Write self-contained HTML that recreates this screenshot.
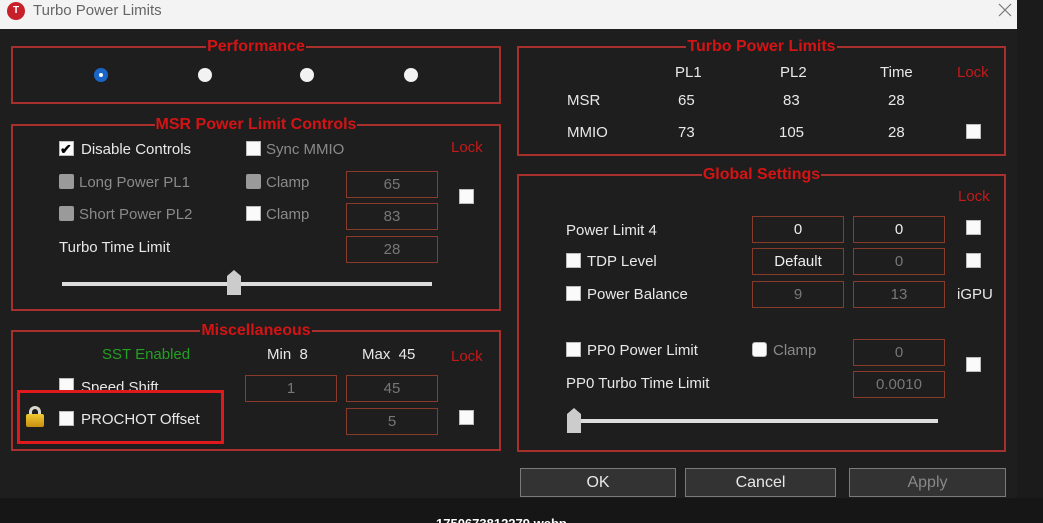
<!DOCTYPE html>
<html><head><meta charset="utf-8"><style>
*{margin:0;padding:0;box-sizing:border-box}
html,body{width:1043px;height:523px;overflow:hidden}
body{background:#161616;position:relative;font-family:"Liberation Sans",sans-serif;font-size:15px;color:#e8e8e8}
.a{position:absolute}
.win{left:0;top:0;width:1017px;height:498px;background:#1e1e1e}
.tb{left:0;top:0;width:1017px;height:29px;background:#f3f3f3}
.box{position:absolute;border:2px solid #a8302c}
.tt{position:absolute;top:-10px;left:0;right:0;text-align:center;line-height:17px}
.tt span{background:#1e1e1e;color:#d41414;font-weight:bold;font-size:16px;padding:0 1px}
.t{position:absolute;line-height:18px;white-space:nowrap;margin-top:1px}
.g{color:#8a8a8a}
.lk{color:#c41a1a}
.cb{position:absolute;width:15px;height:15px;background:#fafafa;border:1px solid #bbb}
.cbd{position:absolute;width:15px;height:15px;background:#9a9a9a;border-radius:2px}
.in{position:absolute;border:1px solid #8a3a2a;height:27px;width:92px;text-align:center;line-height:26px;color:#777}
.in.w{color:#eee}
.rd{position:absolute;width:14px;height:14px;border-radius:50%;background:#f2f2f2}
.btn{position:absolute;top:468px;height:29px;background:#333;border:1px solid #7a7a7a;text-align:center;line-height:27px;font-size:16px}
</style></head><body>
<div class="a win"></div>
<div class="a" style="left:1017px;top:0;width:26px;height:498px;background:#1b1b1b"></div>
<div class="a tb"></div>
<div class="a" style="left:7px;top:2px;width:18px;height:18px;border-radius:50%;background:#c8202a;color:#fff;font-size:10px;font-weight:bold;text-align:center;line-height:18px">T</div>
<div class="t" style="left:33px;top:1px;color:#666;font-size:15px">Turbo Power Limits</div>
<svg class="a" style="left:998px;top:3px" width="14" height="14"><path d="M1 1L13 13M13 1L1 13" stroke="#777" stroke-width="1.2"/></svg>

<!-- Performance -->
<div class="box" style="left:11px;top:46px;width:490px;height:58px"><div class="tt"><span>Performance</span></div></div>
<div class="rd" style="left:94px;top:68px;background:#1a66c8"></div>
<div class="a" style="left:99px;top:73px;width:4px;height:4px;border-radius:50%;background:#fff"></div>
<div class="rd" style="left:198px;top:68px"></div>
<div class="rd" style="left:300px;top:68px"></div>
<div class="rd" style="left:404px;top:68px"></div>

<!-- MSR -->
<div class="box" style="left:11px;top:124px;width:490px;height:187px"><div class="tt"><span>MSR Power Limit Controls</span></div></div>
<div class="cb" style="left:59px;top:141px"></div><div class="t" style="left:60px;top:139px;color:#000;font-size:14px;font-weight:bold">✔</div>
<div class="t" style="left:81px;top:140px">Disable Controls</div>
<div class="cb" style="left:246px;top:141px"></div><div class="t g" style="left:266px;top:140px">Sync MMIO</div>
<div class="t lk" style="left:451px;top:138px">Lock</div>
<div class="cbd" style="left:59px;top:174px"></div><div class="t g" style="left:79px;top:173px">Long Power PL1</div>
<div class="cbd" style="left:246px;top:174px"></div><div class="t g" style="left:266px;top:173px">Clamp</div>
<div class="cbd" style="left:59px;top:206px"></div><div class="t g" style="left:79px;top:205px">Short Power PL2</div>
<div class="cb" style="left:246px;top:206px"></div><div class="t g" style="left:266px;top:205px">Clamp</div>
<div class="t" style="left:59px;top:238px">Turbo Time Limit</div>
<div class="in" style="left:346px;top:171px">65</div>
<div class="in" style="left:346px;top:203px">83</div>
<div class="in" style="left:346px;top:236px">28</div>
<div class="cb" style="left:459px;top:189px"></div>
<div class="a" style="left:62px;top:282px;width:370px;height:4px;background:#ddd"></div>
<div class="a" style="left:227px;top:276px;width:14px;height:19px;background:#ccc"></div>
<div class="a" style="left:227px;top:270px;width:0;height:0;border-left:7px solid transparent;border-right:7px solid transparent;border-bottom:6px solid #ccc"></div>

<!-- Misc -->
<div class="box" style="left:11px;top:330px;width:490px;height:121px"><div class="tt"><span>Miscellaneous</span></div></div>
<div class="t" style="left:102px;top:345px;color:#23a023">SST Enabled</div>
<div class="t" style="left:267px;top:345px">Min&nbsp; 8</div>
<div class="t" style="left:362px;top:345px">Max&nbsp; 45</div>
<div class="t lk" style="left:451px;top:347px">Lock</div>
<div class="cb" style="left:59px;top:378px"></div><div class="t" style="left:81px;top:378px">Speed Shift</div>
<div class="in" style="left:245px;top:375px">1</div>
<div class="in" style="left:346px;top:375px">45</div>
<div class="in" style="left:346px;top:408px">5</div>
<div class="cb" style="left:459px;top:410px"></div>
<div class="a" style="left:17px;top:390px;width:207px;height:54px;border:3px solid #e0191d;background:#1e1e1e"></div>
<div class="a" style="left:29px;top:406px;width:12px;height:12px;border:3px solid #d8d8d0;border-bottom:none;border-radius:6px 6px 0 0"></div>
<div class="a" style="left:26px;top:414px;width:18px;height:13px;background:linear-gradient(#f0c830,#c89010);border-radius:2px"></div>
<div class="cb" style="left:59px;top:411px"></div><div class="t" style="left:81px;top:410px">PROCHOT Offset</div>

<!-- Turbo Power Limits -->
<div class="box" style="left:517px;top:46px;width:489px;height:110px"><div class="tt"><span>Turbo Power Limits</span></div></div>
<div class="t" style="left:675px;top:63px">PL1</div>
<div class="t" style="left:780px;top:63px">PL2</div>
<div class="t" style="left:880px;top:63px">Time</div>
<div class="t lk" style="left:957px;top:63px">Lock</div>
<div class="t" style="left:567px;top:91px">MSR</div>
<div class="t" style="left:678px;top:91px">65</div>
<div class="t" style="left:783px;top:91px">83</div>
<div class="t" style="left:888px;top:91px">28</div>
<div class="t" style="left:567px;top:123px">MMIO</div>
<div class="t" style="left:678px;top:123px">73</div>
<div class="t" style="left:779px;top:123px">105</div>
<div class="t" style="left:888px;top:123px">28</div>
<div class="cb" style="left:966px;top:124px"></div>

<!-- Global -->
<div class="box" style="left:517px;top:174px;width:489px;height:278px"><div class="tt"><span>Global Settings</span></div></div>
<div class="t lk" style="left:958px;top:187px">Lock</div>
<div class="t" style="left:566px;top:221px">Power Limit 4</div>
<div class="in w" style="left:752px;top:216px">0</div>
<div class="in w" style="left:853px;top:216px">0</div>
<div class="cb" style="left:966px;top:220px"></div>
<div class="cb" style="left:566px;top:253px"></div><div class="t" style="left:587px;top:252px">TDP Level</div>
<div class="in w" style="left:752px;top:248px">Default</div>
<div class="in" style="left:853px;top:248px">0</div>
<div class="cb" style="left:966px;top:253px"></div>
<div class="cb" style="left:566px;top:286px"></div><div class="t" style="left:587px;top:285px">Power Balance</div>
<div class="in" style="left:752px;top:281px">9</div>
<div class="in" style="left:853px;top:281px">13</div>
<div class="t" style="left:957px;top:285px">iGPU</div>
<div class="cb" style="left:566px;top:342px"></div><div class="t" style="left:587px;top:341px">PP0 Power Limit</div>
<div class="cb" style="left:752px;top:342px;border-radius:3px"></div><div class="t g" style="left:773px;top:341px">Clamp</div>
<div class="in" style="left:853px;top:339px">0</div>
<div class="in" style="left:853px;top:371px">0.0010</div>
<div class="cb" style="left:966px;top:357px"></div>
<div class="t" style="left:566px;top:374px">PP0 Turbo Time Limit</div>
<div class="a" style="left:575px;top:419px;width:363px;height:4px;background:#ddd"></div>
<div class="a" style="left:567px;top:414px;width:14px;height:19px;background:#ccc"></div>
<div class="a" style="left:567px;top:408px;width:0;height:0;border-left:7px solid transparent;border-right:7px solid transparent;border-bottom:6px solid #ccc"></div>

<div class="btn" style="left:520px;width:156px">OK</div>
<div class="btn" style="left:685px;width:151px">Cancel</div>
<div class="btn" style="left:849px;width:157px;color:#888">Apply</div>

<div class="t" style="left:436px;top:514px;font-weight:bold;font-size:13px;color:#fff">1750673812279.webp</div>
</body></html>
